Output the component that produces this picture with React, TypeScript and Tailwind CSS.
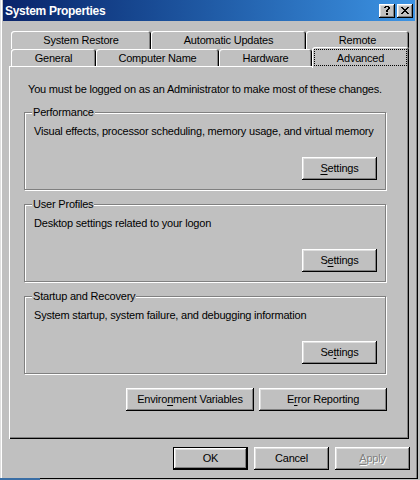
import React from "react";

const btn3d =
  "shadow-[inset_-1px_-1px_0_#000,inset_1px_1px_0_#fff,inset_-2px_-2px_0_#808080,inset_2px_2px_0_#dfdfdf]";

function Button({
  children,
  className = "",
  isDefault = false,
  disabled = false,
}: {
  children: React.ReactNode;
  className?: string;
  isDefault?: boolean;
  disabled?: boolean;
}) {
  const text = disabled
    ? "text-[#808080] [text-shadow:1px_1px_0_#fff]"
    : "text-black";
  if (isDefault) {
    return (
      <div className={"border border-black bg-[#c0c0c0] " + className}>
        <div
          className={
            "w-full h-full flex items-center justify-center leading-[13px] " +
            btn3d +
            " " +
            text
          }
        >
          {children}
        </div>
      </div>
    );
  }
  return (
    <div
      className={
        "flex items-center justify-center bg-[#c0c0c0] leading-[13px] " +
        btn3d +
        " " +
        text +
        " " +
        className
      }
    >
      {children}
    </div>
  );
}

function U({ children }: { children: React.ReactNode }) {
  return <span className="underline underline-offset-[2px]">{children}</span>;
}

const tab3d =
  "shadow-[inset_1px_1px_0_#fff,inset_-1px_0_0_#000,inset_-2px_0_0_#808080]";

function Tab({ label, className = "" }: { label: string; className?: string }) {
  return (
    <div
      className={
        "flex items-start justify-center pt-[3px] rounded-t-[3px] bg-[#c0c0c0] leading-[13px] " +
        tab3d +
        " " +
        className
      }
    >
      {label}
    </div>
  );
}

function Group({
  legend,
  desc,
  children,
  className = "",
}: {
  legend: string;
  desc: string;
  children: React.ReactNode;
  className?: string;
}) {
  return (
    <div
      className={
        "relative w-[362px] h-[78px] border border-[#808080] shadow-[1px_1px_0_#fff,inset_1px_1px_0_#fff] flex flex-col pl-[9px] pr-[8px] pt-[12px] " +
        className
      }
    >
      <span className="absolute left-[7px] -top-[7px] px-[1px] bg-[#c0c0c0] leading-[13px]">
        {legend}
      </span>
      <div className="leading-[13px]">{desc}</div>
      <div className="flex justify-end mt-[19px]">{children}</div>
    </div>
  );
}

function CloseGlyph() {
  const rows = [
    "XX....XX",
    ".XX..XX.",
    "..XXXX..",
    "...XX...",
    "..XXXX..",
    ".XX..XX.",
    "XX....XX",
  ];
  return (
    <svg width="8" height="7" viewBox="0 0 8 7" shapeRendering="crispEdges">
      {rows.flatMap((r, y) =>
        r.split("").map((c, x) =>
          c === "X" ? <rect key={x + "-" + y} x={x} y={y} width="1" height="1" fill="#000" /> : null
        )
      )}
    </svg>
  );
}

function HelpGlyph() {
  const rows = [
    "..XXXX..",
    ".XX..XX.",
    ".....XX.",
    "....XX..",
    "...XX...",
    "...XX...",
    "........",
    "...XX...",
    "...XX...",
  ];
  return (
    <svg width="8" height="9" viewBox="0 0 8 9" shapeRendering="crispEdges">
      {rows.flatMap((r, y) =>
        r.split("").map((c, x) =>
          c === "X" ? <rect key={x + "-" + y} x={x} y={y} width="1" height="1" fill="#000" /> : null
        )
      )}
    </svg>
  );
}

export default function App() {
  return (
    <div className="relative w-[420px] h-[480px] bg-[#c0c0c0] overflow-hidden font-['Liberation_Sans',Arial,sans-serif] text-[11px] tracking-[-0.2px] text-black">
      <div className="w-[418px] h-[479px] px-[3px] flex flex-col shadow-[inset_-1px_-1px_0_#000,inset_1px_0_0_#dfdfdf,inset_-2px_0_0_#808080,inset_2px_0_0_#fff]">
        {/* Title bar */}
        <div className="h-[21px] flex items-center pl-[2px] pr-[2px] bg-linear-to-r from-[#0a246a] to-[#3d94e4]">
          <span className="text-white font-bold text-[12px] tracking-[-0.3px] leading-[14px]">
            System Properties
          </span>
          <div className="ml-auto flex gap-[1px]">
            <div className={"w-[16px] h-[14px] bg-[#c0c0c0] flex items-center justify-center " + btn3d}>
              <HelpGlyph />
            </div>
            <div className={"ml-[1px] w-[16px] h-[14px] bg-[#c0c0c0] flex items-center justify-center " + btn3d}>
              <CloseGlyph />
            </div>
          </div>
        </div>

        {/* Tab control */}
        <div className="ml-[6px] w-[400px] mt-[10px] flex flex-col">
          <div className="flex pl-[2px] h-[18px]">
            <Tab label="System Restore" className="w-[140px] h-[18px]" />
            <Tab label="Automatic Updates" className="w-[155px] h-[18px]" />
            <Tab label="Remote" className="w-[103px] h-[18px]" />
          </div>
          <div className="flex pl-[2px] h-[17px] items-end">
            <Tab label="General" className="w-[85px] h-[17px]" />
            <Tab label="Computer Name" className="w-[123px] h-[17px]" />
            <Tab label="Hardware" className="w-[93px] h-[17px]" />
            <div
              className={
                "relative z-10 w-[97px] h-[21px] -mb-[2px] rounded-t-[3px] bg-[#c0c0c0] flex pt-[2px] pl-[2px] pr-[2px] pb-[2px] " +
                tab3d
              }
            >
              <div className="flex-1 border border-dotted border-black flex justify-center items-start pt-[2px] leading-[13px]">
                Advanced
              </div>
            </div>
          </div>
          <div className="h-[373px] flex flex-col pl-[15px] pt-[17px] bg-[#c0c0c0] shadow-[inset_1px_1px_0_#fff,inset_-1px_-1px_0_#000,inset_-2px_-2px_0_#808080]">
            <div className="leading-[13px] pl-[4px]">
              You must be logged on as an Administrator to make most of these changes.
            </div>
            <Group
              className="mt-[16px]"
              legend="Performance"
              desc="Visual effects, processor scheduling, memory usage, and virtual memory"
            >
              <Button className="w-[75px] h-[23px]">
                <U>S</U>ettings
              </Button>
            </Group>
            <Group
              className="mt-[14px]"
              legend="User Profiles"
              desc="Desktop settings related to your logon"
            >
              <Button className="w-[75px] h-[23px]">
                S<U>e</U>ttings
              </Button>
            </Group>
            <Group
              className="mt-[14px]"
              legend="Startup and Recovery"
              desc="System startup, system failure, and debugging information"
            >
              <Button className="w-[75px] h-[23px]">
                Se<U>t</U>tings
              </Button>
            </Group>
            <div className="w-[363px] flex justify-end gap-[5px] mt-[14px]">
              <Button className="w-[128px] h-[23px]">
                Enviro<U>n</U>ment Variables
              </Button>
              <Button className="w-[128px] h-[23px]">
                E<U>r</U>ror Reporting
              </Button>
            </div>
          </div>
        </div>

        {/* Dialog buttons */}
        <div className="flex justify-end gap-[6px] pr-[5px] mt-[8px]">
          <Button isDefault className="w-[75px] h-[23px]">
            OK
          </Button>
          <Button className="w-[75px] h-[23px]">Cancel</Button>
          <Button disabled className="w-[75px] h-[23px]">
            <U>A</U>pply
          </Button>
        </div>
      </div>
      <div className="absolute left-0 bottom-0 w-[40px] h-[2px] bg-[#3a6ea5]" />
    </div>
  );
}
